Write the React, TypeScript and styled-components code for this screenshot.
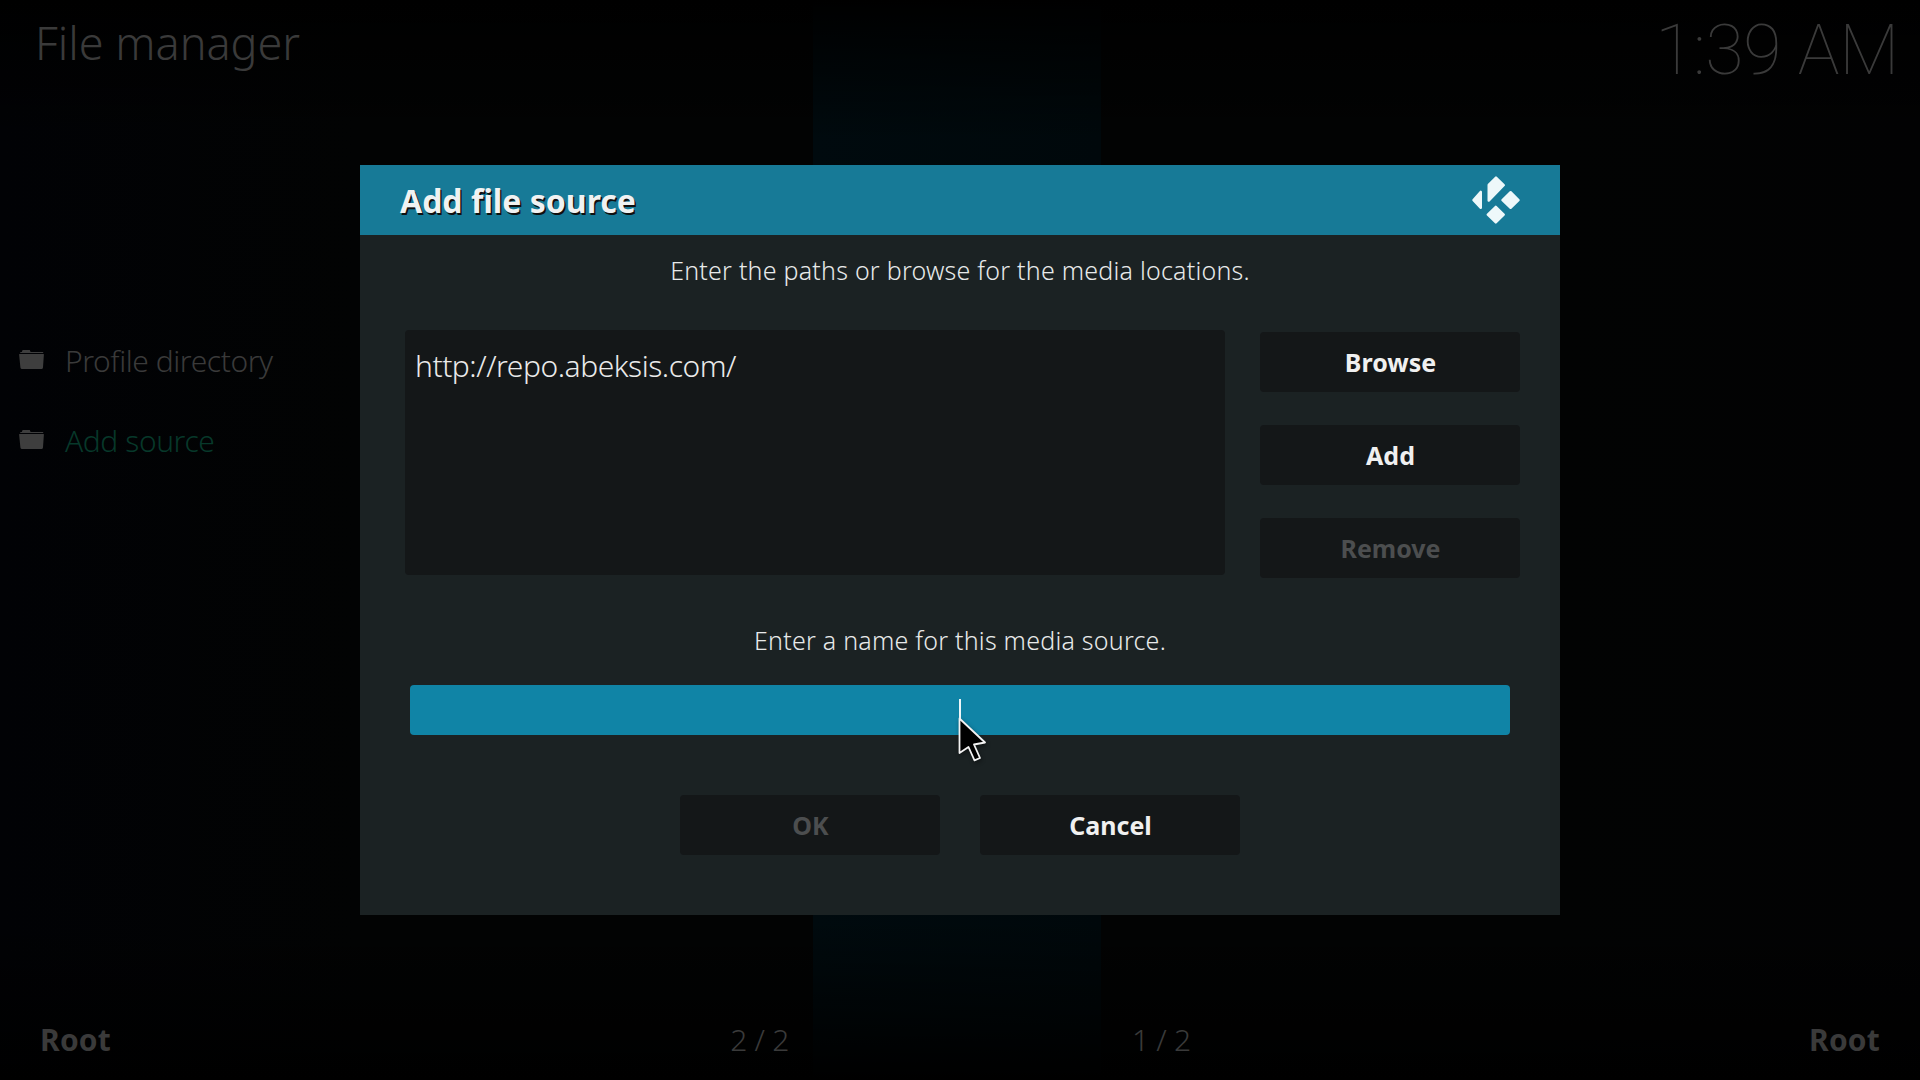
import React from 'react';
import styled, { createGlobalStyle } from 'styled-components';

const GlobalStyle = createGlobalStyle`
  * { box-sizing: border-box; }
  body { margin: 0; background: #000; overflow: hidden; }
`;

const Screen = styled.div`
  position: relative;
  width: 1920px;
  height: 1080px;
  overflow: hidden;
  display: flex;
  flex-direction: column;
  justify-content: space-between;
  font-family: 'Noto Sans', 'Open Sans', sans-serif;
  font-weight: 300;
  font-size: 30px;
  line-height: 40px;
  color: #3a3a3a;
  background:
    linear-gradient(to bottom, #000 0, transparent 140px, transparent 920px, #000 1080px),
    linear-gradient(to right, transparent 813px, #000a0e 813px, #00080b 1101px, transparent 1101px),
    linear-gradient(to right, #010205, #020303 360px, #020303 1560px, #020203);
`;

const TopBar = styled.header`
  display: flex;
  justify-content: space-between;
  padding: 2px 21px 0 35px;
  height: 100px;
`;

const ScreenTitle = styled.h1`
  margin: 0;
  font-size: 45px;
  font-weight: 300;
  line-height: 82px;
`;

const Clock = styled.time`
  font-family: Roboto, sans-serif;
  font-weight: 100;
  font-size: 70px;
  line-height: 96px;
  letter-spacing: -0.3px;
`;

const FileList = styled.ul`
  list-style: none;
  margin: 0;
  padding: 221px 0 0 19px;
  flex: 1;
`;

const FileItem = styled.li<{ $accent?: boolean }>`
  display: flex;
  align-items: center;
  gap: 20px;
  height: 80px;
  letter-spacing: -0.43px;
  color: ${(p) => (p.$accent ? '#07382a' : '#3a3a3a')};
  svg { margin-top: -3px; }
`;

const BottomBar = styled.footer`
  display: grid;
  grid-template-columns: 1fr 288px 1fr;
  padding: 0 40px;
  height: 60px;
`;

const PaneStatus = styled.div<{ $start: number; $end: number }>`
  display: flex;
  justify-content: space-between;
  padding: 0 ${(p) => p.$end}px 0 ${(p) => p.$start}px;
`;

const ItemCount = styled.span`
  letter-spacing: -0.3px;
`;

const PanePath = styled.strong`
  font-weight: 700;
  letter-spacing: 0.2px;
`;

const Overlay = styled.div`
  position: absolute;
  inset: 0;
  display: flex;
  justify-content: center;
  align-items: center;
`;

const Dialog = styled.section`
  width: 1200px;
  height: 750px;
  display: flex;
  flex-direction: column;
  background: #1b2223;
  color: #e8eaea;
`;

const DialogHeader = styled.header`
  display: flex;
  flex: none;
  justify-content: space-between;
  align-items: center;
  height: 70px;
  padding: 0 40px;
  background: #177a97;
`;

const DialogTitle = styled.h2`
  margin: 2px 0 0;
  font-size: 32px;
  font-weight: 700;
  color: #f0f2f2;
  text-shadow: 1.5px 1.5px 0 #101010;
`;

const Hint = styled.p<{ $top: number }>`
  margin: ${(p) => p.$top}px 0 0;
  text-align: center;
  font-size: 25px;
  line-height: 34px;
  letter-spacing: 0.23px;
`;

const SourceRow = styled.div`
  display: flex;
  gap: 35px;
  padding: 43px 40px 0 45px;
`;

const PathList = styled.div`
  width: 820px;
  height: 245px;
  padding: 16px 10px;
  border-radius: 4px;
  background: #141718;
  color: #eaeaea;
  letter-spacing: -0.47px;
`;

const ButtonColumn = styled.div`
  display: flex;
  flex-direction: column;
  gap: 33px;
  padding-top: 2px;
`;

const Button = styled.button`
  width: 260px;
  height: 60px;
  padding: 0 0 0 1px;
  border: 0;
  border-radius: 4px;
  background: #141718;
  font: 700 25px/34px 'Noto Sans', sans-serif;
  color: #f0f0f0;
  &:disabled { color: #4c4e4f; }
`;

const NameField = styled.div`
  display: flex;
  flex: none;
  justify-content: center;
  align-items: center;
  height: 50px;
  margin: 28px 50px 0;
  border-radius: 4px;
  background: #1084a6;
`;

const Caret = styled.span`
  width: 2px;
  height: 24px;
  margin-top: 2px;
  background: #eef6f8;
`;

const Actions = styled.div`
  display: flex;
  justify-content: center;
  gap: 40px;
  margin-top: 60px;
`;

const Pointer = styled.svg`
  position: absolute;
  left: 950px;
  top: 710px;
  filter: drop-shadow(1px 2px 2px rgba(0, 0, 0, 0.4));
`;

const Folder = () => (
  <svg width="26" height="20" viewBox="0 0 26 20" fill="#3e3e3e">
    <path d="M1.300 2.900V2h1.500L3.600.1h7.200L11.600 2h12.600v.9z" />
    <path d="M.6 3.900h23.800q.6 0 .5.6L24 17.500q-.2 1.500-1.600 1.500H3q-1.400 0-1.600-1.500L.1 4.500Q0 3.900.6 3.900z" />
  </svg>
);

const KodiLogo = () => (
  <svg width="48" height="48" viewBox="0 0 48 48" fill="#eef8fa" stroke="#eef8fa" strokeWidth="2.400" strokeLinejoin="round">
    <path d="M8.800 15.800V31.800L1.500 24.100z" />
    <path d="M16.700 8.900L24 1.500 31.700 9.200 16.700 24.600z" />
    <path d="M38.600 16.200L46.500 24.100 38.600 31.800 30.500 24.100z" />
    <path d="M23.800 30.800L31.700 38.600 23.800 46.500 15.800 38.600z" />
  </svg>
);

export default function App() {
  return (
    <Screen>
      <GlobalStyle />
      <TopBar>
        <ScreenTitle>File manager</ScreenTitle>
        <Clock>1:39 AM</Clock>
      </TopBar>
      <FileList>
        <FileItem><Folder />Profile directory</FileItem>
        <FileItem $accent><Folder />Add source</FileItem>
      </FileList>
      <BottomBar>
        <PaneStatus $start={0} $end={27}>
          <PanePath>Root</PanePath>
          <ItemCount>2 / 2</ItemCount>
        </PaneStatus>
        <span />
        <PaneStatus $start={28} $end={0}>
          <ItemCount>1 / 2</ItemCount>
          <PanePath>Root</PanePath>
        </PaneStatus>
      </BottomBar>
      <Overlay>
        <Dialog>
          <DialogHeader>
            <DialogTitle>Add file source</DialogTitle>
            <KodiLogo />
          </DialogHeader>
          <Hint $top={18}>Enter the paths or browse for the media locations.</Hint>
          <SourceRow>
            <PathList>http://repo.abeksis.com/</PathList>
            <ButtonColumn>
              <Button>Browse</Button>
              <Button>Add</Button>
              <Button disabled>Remove</Button>
            </ButtonColumn>
          </SourceRow>
          <Hint $top={45}>Enter a name for this media source.</Hint>
          <NameField><Caret /></NameField>
          <Actions>
            <Button disabled>OK</Button>
            <Button>Cancel</Button>
          </Actions>
        </Dialog>
      </Overlay>
      <Pointer width="45" height="60" viewBox="0 0 45 60">
        <path d="M9.500 8.500L35 32.500 24 34.500 30 48 24.500 50.300 18.500 37 9.500 43z" fill="#000" stroke="#f2f2f2" strokeWidth="1.800" strokeLinejoin="round" />
      </Pointer>
    </Screen>
  );
}
